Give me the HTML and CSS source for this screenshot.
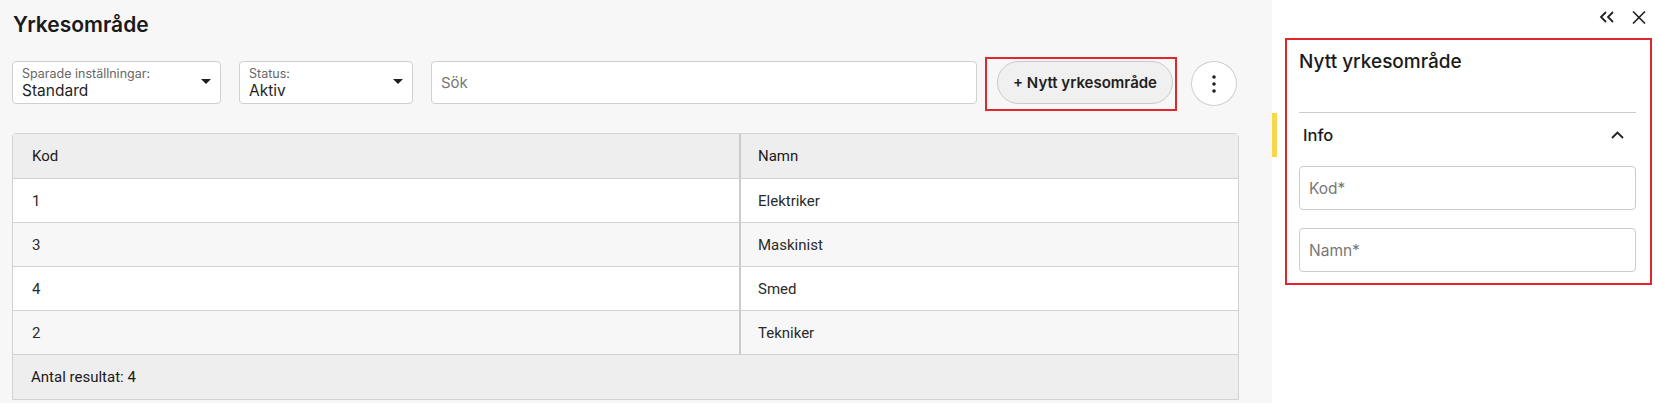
FILE: index.html
```html
<!DOCTYPE html>
<html lang="sv">
<head>
  <meta charset="UTF-8" />
  <meta name="viewport" content="width=device-width, initial-scale=1.0"/>
  <title>Yrkesområde</title>
  <link rel="stylesheet" href="styles.css">
</head>
<body>
  <div class="layout">
    <main class="main">
      <h1 class="page-title">Yrkesområde</h1>

      <div class="toolbar">
        <div class="select select-saved">
          <div class="select-text">
            <span class="select-label">Sparade inställningar:</span>
            <span class="select-value">Standard</span>
          </div>
          <span class="caret"></span>
        </div>
        <div class="select select-status">
          <div class="select-text">
            <span class="select-label">Status:</span>
            <span class="select-value">Aktiv</span>
          </div>
          <span class="caret"></span>
        </div>
        <input type="text" class="search" placeholder="Sök" />
        <div class="highlight">
          <button class="new-btn">+ Nytt yrkesområde</button>
        </div>
        <button class="more-btn" aria-label="Fler val">
          <svg width="4" height="18" viewBox="0 0 4 18">
            <circle cx="2" cy="2" r="1.8" fill="#222"/>
            <circle cx="2" cy="9" r="1.8" fill="#222"/>
            <circle cx="2" cy="16" r="1.8" fill="#222"/>
          </svg>
        </button>
      </div>

      <div class="grid">
        <div class="grid-row grid-head">
          <div class="cell col-code">Kod</div>
          <div class="cell col-name">Namn</div>
        </div>
        <div class="grid-row">
          <div class="cell col-code">1</div>
          <div class="cell col-name">Elektriker</div>
        </div>
        <div class="grid-row">
          <div class="cell col-code">3</div>
          <div class="cell col-name">Maskinist</div>
        </div>
        <div class="grid-row">
          <div class="cell col-code">4</div>
          <div class="cell col-name">Smed</div>
        </div>
        <div class="grid-row">
          <div class="cell col-code">2</div>
          <div class="cell col-name">Tekniker</div>
        </div>
        <div class="grid-foot">Antal resultat: 4</div>
      </div>
    </main>

    <aside class="panel">
      <div class="panel-actions">
        <button class="icon-btn" aria-label="Expandera">
          <svg width="16" height="12" viewBox="0 0 16 12" fill="none" stroke="#222" stroke-width="1.8">
            <polyline points="7,1 2,6 7,11"/>
            <polyline points="14,1 9,6 14,11"/>
          </svg>
        </button>
        <button class="icon-btn" aria-label="Stäng">
          <svg width="14" height="13" viewBox="0 0 14 13" fill="none" stroke="#222" stroke-width="1.6">
            <line x1="1" y1="0.5" x2="13" y2="12.5"/>
            <line x1="13" y1="0.5" x2="1" y2="12.5"/>
          </svg>
        </button>
      </div>

      <div class="form-card">
        <h2 class="form-title">Nytt yrkesområde</h2>
        <div class="section">
          <div class="section-head">
            <span>Info</span>
            <svg width="13" height="8" viewBox="0 0 13 8" fill="none" stroke="#222" stroke-width="1.8">
              <polyline points="1,7 6.5,1.5 12,7"/>
            </svg>
          </div>
          <input type="text" class="field" placeholder="Kod*" />
          <input type="text" class="field" placeholder="Namn*" />
        </div>
      </div>
    </aside>
  </div>
</body>
</html>
```

FILE: styles.css
```css
body {
  margin: 0;
  padding: 0;
  font-family: 'Inter', 'Noto Sans', sans-serif;
  color: #1f1f1f;
  background-color: #f7f7f7;
}
button, input {
  font-family: inherit;
}
.layout {
  display: flex;
  height: 403px;
  overflow: hidden;
}

/* left side: list */
.main {
  width: 1272px;
  box-sizing: border-box;
  padding: 12px 0 0 12px;
  background-color: #f7f7f7;
}
.page-title {
  margin: 0 0 0 1px;
  font-size: 21px;
  line-height: 25px;
  font-weight: 600;
  color: #1a1a1a;
}
.toolbar {
  display: flex;
  align-items: flex-start;
  margin-top: 24px;
}
.select {
  display: flex;
  align-items: center;
  justify-content: space-between;
  box-sizing: border-box;
  height: 43px;
  padding: 0 9px 0 9px;
  background-color: #fff;
  border: 1px solid #cfcfcf;
  border-radius: 4px;
}
.select-saved {
  width: 209px;
  margin-right: 18px;
}
.select-status {
  width: 174px;
  margin-right: 18px;
}
.select-text {
  display: flex;
  flex-direction: column;
  margin-top: 1px;
}
.select-label {
  font-size: 12.5px;
  line-height: 14px;
  color: #666;
}
.select-value {
  font-size: 15.5px;
  line-height: 19px;
  color: #1f1f1f;
}
.caret {
  width: 0;
  height: 0;
  border-left: 5px solid transparent;
  border-right: 5px solid transparent;
  border-top: 5px solid #1f1f1f;
  margin-top: -3px;
}
.search {
  box-sizing: border-box;
  width: 546px;
  height: 43px;
  margin-right: 8px;
  padding: 0 9px;
  font-size: 15px;
  border: 1px solid #cfcfcf;
  border-radius: 4px;
  background-color: #fff;
  outline: none;
}
.search::placeholder {
  color: #777;
}
.highlight {
  box-sizing: border-box;
  width: 192px;
  height: 54px;
  margin-top: -4px;
  margin-right: 14px;
  padding: 2px 2px 0 10px;
  border: 2px solid #e3262c;
}
.new-btn {
  box-sizing: border-box;
  width: 176px;
  height: 43px;
  font-size: 15px;
  font-weight: 600;
  color: #1f1f1f;
  background-color: #f0f0f0;
  border: 1px solid #c9c9c9;
  border-radius: 22px;
  cursor: pointer;
}
.more-btn {
  box-sizing: border-box;
  width: 46px;
  height: 45px;
  display: flex;
  align-items: center;
  justify-content: center;
  background-color: #fff;
  border: 1px solid #cfcfcf;
  border-radius: 50%;
  cursor: pointer;
  padding: 0;
}

/* result grid */
.grid {
  width: 1225px;
  margin-top: 22px;
  border: 1px solid #d2d2d2;
  border-radius: 4px 4px 0 0;
  font-family: 'Roboto', 'Liberation Sans', sans-serif;
  font-size: 15px;
  color: #2a2a2a;
}
.grid-row {
  display: flex;
  height: 43px;
  border-bottom: 1px solid #d2d2d2;
  background-color: #fff;
}
.grid-row:nth-child(odd) {
  background-color: #f7f7f7;
}
.grid-head.grid-row {
  height: 44px;
  background-color: #eeeeee;
  color: #1a1a1a;
}
.cell {
  display: flex;
  align-items: center;
}
.col-code {
  width: 728px;
  padding-left: 19px;
  box-sizing: border-box;
  border-right: 2px solid #cbcbcb;
}
.col-name {
  flex: 1;
  padding-left: 17px;
}
.grid-foot {
  display: flex;
  align-items: center;
  height: 44px;
  padding-left: 18px;
  background-color: #eeeeee;
  color: #1a1a1a;
}

/* right side: form panel */
.panel {
  flex: 1;
  box-sizing: border-box;
  padding: 0 3px 0 13px;
  background-color: #fff;
}
.panel-actions {
  display: flex;
  justify-content: flex-end;
  align-items: center;
  gap: 17px;
  height: 38px;
  padding-right: 6px;
  padding-bottom: 4px;
  box-sizing: border-box;
}
.icon-btn {
  background: none;
  border: none;
  padding: 0;
  display: flex;
  cursor: pointer;
}
.form-card {
  border: 2px solid #e3262c;
  padding: 10px 14px 11px 12px;
}
.form-title {
  margin: 0;
  font-size: 19px;
  line-height: 23px;
  font-weight: 500;
  color: #1a1a1a;
  padding-bottom: 39px;
  border-bottom: 1px solid #cccccc;
}
.section-head {
  position: relative;
  display: flex;
  align-items: center;
  justify-content: space-between;
  height: 44px;
  padding: 0 12px 0 4px;
  font-size: 16.5px;
  font-weight: 500;
  color: #1a1a1a;
}
.section-head::before {
  content: "";
  position: absolute;
  left: -27px;
  top: 0;
  bottom: 0;
  width: 5px;
  background-color: #f7d84b;
}
.field {
  display: block;
  box-sizing: border-box;
  width: 100%;
  height: 44px;
  margin-top: 9px;
  padding: 0 9px;
  font-size: 15.5px;
  border: 1px solid #cccccc;
  border-radius: 4px;
  outline: none;
}
.field + .field {
  margin-top: 18px;
}
.field::placeholder {
  color: #777;
}
```
